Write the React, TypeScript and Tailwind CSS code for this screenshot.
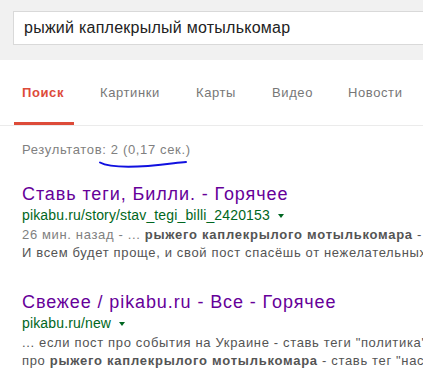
import React from 'react';

interface Result {
  title: string;
  url: string;
  lines: React.ReactNode[];
}

// outer widths put each tab label where the reference has it
const tabs = [
  { label: 'Поиск', width: 'w-[78px]' },
  { label: 'Картинки', width: 'w-[96px]' },
  { label: 'Карты', width: 'w-[76px]' },
  { label: 'Видео', width: 'w-[76px]' },
  { label: 'Новости', width: 'w-auto' },
];

const results: Result[] = [
  {
    title: 'Ставь теги, Билли. - Горячее',
    url: 'pikabu.ru/story/stav_tegi_billi_2420153',
    lines: [
      <>
        <span className="text-[#808080]">26 мин. назад - ... </span>
        <b className="tracking-[0.75px]">рыжего каплекрылого мотылькомара</b> - ставь тег и не забудь
      </>,
      <>И всем будет проще, и свой пост спасёшь от нежелательных минусов ...</>,
    ],
  },
  {
    title: 'Свежее / pikabu.ru - Все - Горячее',
    url: 'pikabu.ru/new',
    lines: [
      <>... если пост про события на Украине - ставь теги "политика" и "Украина" ...</>,
      <>
        про <b className="tracking-[0.75px]">рыжего каплекрылого мотылькомара</b> - ставь тег "насекомые" ...
      </>,
    ],
  },
];

export default function App() {
  return (
    <div className="min-h-screen w-full overflow-hidden bg-white font-['Liberation_Sans',Arial,sans-serif]">
      {/* search header */}
      <div className="h-[60px] overflow-hidden bg-[#f1f1f1] pl-[13px] pt-[11px]">
        <div className="flex h-[34px] w-[600px] items-center border border-[#d9d9d9] bg-white pl-[10px] text-[16px] tracking-[0.25px] text-[#222]">
          рыжий каплекрылый мотылькомар
        </div>
      </div>

      {/* tabs */}
      <div className="flex border-b border-[#ebebeb] pl-[14px]">
        {tabs.map((tab, i) => (
          <div key={tab.label} className={tab.width}>
            <div
              className={`inline-block h-[65px] whitespace-nowrap px-2 pt-[25px] text-[13px] tracking-[0.6px] leading-4 border-b-[3px] ${
                i === 0
                  ? 'w-[60px] border-[#dd4b39] font-bold tracking-[0.3px] text-[#dd4b39]'
                  : 'border-transparent text-[#777]'
              }`}
            >
              {tab.label}
            </div>
          </div>
        ))}
      </div>

      {/* stats */}
      <div className="relative mt-4 pl-[22px] text-[13px] tracking-[0.65px] leading-4 text-[#808080]">
        Результатов: 2 (0,17 сек.)
        <svg
          className="absolute left-[98px] top-[16px]"
          width="92"
          height="12"
          viewBox="0 0 92 12"
          fill="none"
        >
          <path
            d="M2 4.5 C 10 9, 28 9.5, 50 8 S 78 4.5, 88 4"
            stroke="#1010e0"
            strokeWidth="2"
            strokeLinecap="round"
          />
        </svg>
      </div>

      {/* results */}
      <div className="mt-6 flex flex-col gap-[28px] pl-[22px]">
        {results.map((r) => (
          <div key={r.url}>
            <div className="whitespace-nowrap text-[18px] tracking-[0.9px] leading-[24px] text-[#660099]">{r.title}</div>
            <div className="flex items-center whitespace-nowrap text-[14px] tracking-[0.15px] leading-[18px] text-[#006621]">
              {r.url}
              <span className="ml-[8px] mt-[1px] h-0 w-0 border-x-[3px] border-t-[4px] border-x-transparent border-t-[#006621]" />
            </div>
            <div className="mt-[2px] text-[13px] tracking-[0.65px] leading-[18px] text-[#545454]">
              {r.lines.map((line, i) => (
                <div key={i} className="overflow-hidden whitespace-nowrap">
                  {line}
                </div>
              ))}
            </div>
          </div>
        ))}
      </div>
    </div>
  );
}
